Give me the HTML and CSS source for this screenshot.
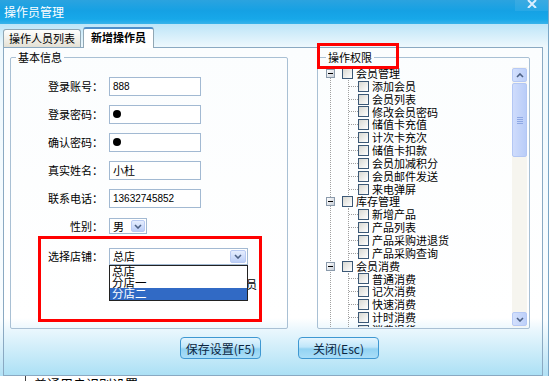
FILE: index.html
```html
<!doctype html>
<html>
    <head>
        <meta charset='utf-8'>
        <title>操作员管理</title>
        <link rel="stylesheet" href="styles.css">
    </head>
    <body>
        <div class='window'>
            <div class='titlebar'>
                <span class='title'>操作员管理</span>
                <span class='close'>
                    <svg width='10' height='8' viewBox='0 0 10 8'><path d='M1 0L9 8M9 0L1 8' stroke='#dcefff' stroke-width='2'/></svg>
                </span>
            </div>
            <div class='tabs'>
                <span class='tab'>操作人员列表</span>
                <span class='tab tab-active'>新增操作员</span>
            </div>
            <div class='panel'>
                <div class='groups'>
                    <fieldset class='group basic'>
                        <legend>基本信息</legend>
                        <div class='field'>
                            <span class='field-label'>登录账号：</span>
                            <span class='input'>888</span>
                        </div>
                        <div class='field'>
                            <span class='field-label'>登录密码：</span>
                            <span class='input'><i class='dot'></i></span>
                        </div>
                        <div class='field'>
                            <span class='field-label'>确认密码：</span>
                            <span class='input'><i class='dot'></i></span>
                        </div>
                        <div class='field'>
                            <span class='field-label'>真实姓名：</span>
                            <span class='input input-cjk'>小杜</span>
                        </div>
                        <div class='field'>
                            <span class='field-label'>联系电话：</span>
                            <span class='input'>13632745852</span>
                        </div>
                        <div class='field'>
                            <span class='field-label'>性别：</span>
                            <span class='select select-sex'>
                                <span>男</span>
                                <span class='select-btn'><svg width='8' height='5' viewBox='0 0 8 5'><path d='M1 1L4 4L7 1' fill='none' stroke='#4d6185' stroke-width='1.6'/></svg></span>
                            </span>
                        </div>
                        <div class='field field-shop'>
                            <span class='field-label'>选择店铺：</span>
                            <span class='select select-shop'>
                                <span>总店</span>
                                <span class='select-btn'><svg width='8' height='5' viewBox='0 0 8 5'><path d='M1 1L4 4L7 1' fill='none' stroke='#4d6185' stroke-width='1.6'/></svg></span>
                                <span class='options'>
                                    <span class='option'>总店</span>
                                    <span class='option'>分店一</span>
                                    <span class='option option-on'>分店二</span>
                                </span>
                            </span>
                        </div>
                        <div class='field'>
                            <span class='field-label'></span>
                            <span class='hidden-note'>设为店铺管理员</span>
                        </div>
                    </fieldset>
                    <fieldset class='group rights'>
                        <legend>操作权限</legend>
                        <div class='tree-wrap'>
                            <div class='tree'>
                                <div class='tree-lines'>
                                    <div class='node'>
                                        <div class='row'><i class='expander'></i><i class='check'></i>会员管理</div>
                                        <div class='children'>
                                            <div class='row'><i class='branch'></i><i class='check'></i>添加会员</div>
                                            <div class='row'><i class='branch'></i><i class='check'></i>会员列表</div>
                                            <div class='row'><i class='branch'></i><i class='check'></i>修改会员密码</div>
                                            <div class='row'><i class='branch'></i><i class='check'></i>储值卡充值</div>
                                            <div class='row'><i class='branch'></i><i class='check'></i>计次卡充次</div>
                                            <div class='row'><i class='branch'></i><i class='check'></i>储值卡扣款</div>
                                            <div class='row'><i class='branch'></i><i class='check'></i>会员加减积分</div>
                                            <div class='row'><i class='branch'></i><i class='check'></i>会员邮件发送</div>
                                            <div class='row'><i class='branch'></i><i class='check'></i>来电弹屏</div>
                                        </div>
                                    </div>
                                    <div class='node'>
                                        <div class='row'><i class='expander'></i><i class='check'></i>库存管理</div>
                                        <div class='children'>
                                            <div class='row'><i class='branch'></i><i class='check'></i>新增产品</div>
                                            <div class='row'><i class='branch'></i><i class='check'></i>产品列表</div>
                                            <div class='row'><i class='branch'></i><i class='check'></i>产品采购进退货</div>
                                            <div class='row'><i class='branch'></i><i class='check'></i>产品采购查询</div>
                                        </div>
                                    </div>
                                    <div class='node'>
                                        <div class='row'><i class='expander'></i><i class='check'></i>会员消费</div>
                                        <div class='children'>
                                            <div class='row'><i class='branch'></i><i class='check'></i>普通消费</div>
                                            <div class='row'><i class='branch'></i><i class='check'></i>记次消费</div>
                                            <div class='row'><i class='branch'></i><i class='check'></i>快速消费</div>
                                            <div class='row'><i class='branch'></i><i class='check'></i>计时消费</div>
                                            <div class='row'><i class='branch'></i><i class='check'></i>消费退货</div>
                                        </div>
                                    </div>
                                </div>
                            </div>
                            <div class='scrollbar'>
                                <span class='sb-btn'><svg width='8' height='5' viewBox='0 0 8 5'><path d='M1 4L4 1L7 4' fill='none' stroke='#4d6185' stroke-width='1.6'/></svg></span>
                                <span class='sb-thumb'><i class='grip'></i></span>
                                <span class='sb-track'></span>
                                <span class='sb-btn'><svg width='8' height='5' viewBox='0 0 8 5'><path d='M1 1L4 4L7 1' fill='none' stroke='#4d6185' stroke-width='1.6'/></svg></span>
                            </div>
                        </div>
                    </fieldset>
                </div>
                <div class='actions'>
                    <button class='btn'>保存设置(F5)</button>
                    <button class='btn'>关闭(Esc)</button>
                </div>
            </div>
            <div class='mark mark-rights'></div>
            <div class='mark mark-shop'></div>
        </div>
        <div class='below'>普通用户识别设置</div>
    </body>
</html>
```
FILE: styles.css
```css
html,body {
    margin:0;
    padding:0;
}
body {
    width:549px;
    height:381px;
    overflow:hidden;
    background:#fff;
    font-family:"Noto Sans CJK SC",sans-serif;
    font-size:11px;
    color:#000;
}
i {
    display:block;
    font-style:normal;
}
.window {
    position:relative;
    height:376px;
    box-sizing:border-box;
    border-right:1px solid #7aa6c6;
    background:linear-gradient(#bde5f8 24px,#eef8fd 47px,#f9fdff 320px,#b2e1f5 376px);
}
.titlebar {
    height:24px;
    display:flex;
    justify-content:space-between;
    background:linear-gradient(#2ba3df,#15a1e4 45%,#17a8e9 80%,#3ab3ea);
    color:#fff;
}
.title {
    padding-left:4px;
    font-size:12px;
    line-height:24px;
}
.close {
    width:33px;
    height:11px;
    display:flex;
    justify-content:center;
    background:rgba(255,255,255,0.08);
}
.tabs {
    height:23px;
    display:flex;
    align-items:flex-end;
    padding-left:3px;
}
.tab {
    box-sizing:border-box;
    height:18px;
    padding:0 5px;
    border:1px solid #91a7b4;
    border-bottom:0;
    border-radius:3px 3px 0 0;
    background:linear-gradient(#fefefd,#f1efe8 55%,#e3e0d4);
    line-height:17px;
    white-space:nowrap;
}
.tab-active {
    position:relative;
    z-index:1;
    height:21px;
    margin-left:2px;
    margin-bottom:-1px;
    padding:0 7px;
    border-top:2px solid #4f8fca;
    background:#fff;
    font-weight:bold;
}
.panel {
    box-sizing:border-box;
    width:540px;
    height:329px;
    margin-left:3px;
    border:1px solid #8aa9c2;
    background:linear-gradient(#fbfdfe,#fff 270px,#e8f6fd 283px,#ace0f5);
}
.groups {
    display:flex;
    gap:29px;
    padding:2px 0 0 6px;
}
.group {
    box-sizing:border-box;
    height:279px;
    margin:0;
    padding:0;
    min-width:0;
    border:1px solid #a9c0d4;
    border-radius:2px;
}
.group legend {
    margin-left:5px;
    padding:0 2px;
    font-size:11px;
    line-height:14px;
}
.basic {
    width:278px;
    padding-top:8px;
}
.rights {
    width:213px;
    padding:3px 1px 0 0;
}
.rights legend {
    margin-left:8px;
}
.field {
    display:flex;
    align-items:center;
    height:28px;
}
.field-shop {
    margin-top:2px;
}
.field-label {
    flex:none;
    width:92px;
    margin-right:6px;
    text-align:right;
}
.input {
    box-sizing:border-box;
    width:92px;
    height:19px;
    padding-left:3px;
    display:flex;
    align-items:center;
    border:1px solid #a2b9d2;
    background:#fff;
    font-family:"Liberation Sans",sans-serif;
    font-size:10px;
}
.input-cjk {
    font-family:"Noto Sans CJK SC",sans-serif;
    font-size:11px;
}
.dot {
    width:8px;
    height:8px;
    border-radius:50%;
    background:#000;
}
.select {
    position:relative;
    box-sizing:border-box;
    height:16px;
    padding:0 1px 0 3px;
    display:flex;
    align-items:center;
    justify-content:space-between;
    border:1px solid #a2b9d2;
    background:#fff;
    line-height:14px;
}
.select-sex {
    width:38px;
}
.select-shop {
    width:139px;
    height:17px;
}
.select-btn {
    box-sizing:border-box;
    width:14px;
    height:12px;
    display:flex;
    align-items:center;
    justify-content:center;
    border:1px solid #b9cbf3;
    border-radius:2px;
    background:linear-gradient(#e6eefe,#bccff8);
}
.select-shop .select-btn {
    width:16px;
    height:13px;
}
.options {
    position:absolute;
    left:-1px;
    top:calc(100% + 1px);
    z-index:2;
    box-sizing:border-box;
    width:139px;
    border:1px solid #222;
    background:#fff;
    font-size:11.5px;
    line-height:11.4px;
}
.option {
    display:block;
    padding-left:2px;
}
.option-on {
    background:#316ac5;
    color:#fff;
}
.hidden-note {
    padding-left:71px;
}
.tree-wrap {
    display:flex;
    height:260px;
}
.tree {
    flex:1;
    overflow:hidden;
    padding-left:12px;
}
.tree-lines {
    border-left:1px dotted #a0a0a0;
}
.row {
    display:flex;
    align-items:center;
    height:12.85px;
    line-height:12.85px;
    white-space:nowrap;
}
.expander {
    position:relative;
    box-sizing:border-box;
    width:9px;
    height:9px;
    margin-left:-5px;
    margin-right:7px;
    border:1px solid #8a9aab;
    background:linear-gradient(135deg,#fff,#c9cfd8);
}
.expander:after {
    content:'';
    position:absolute;
    left:1px;
    top:3px;
    width:5px;
    height:1px;
    background:#000;
}
.check {
    flex:none;
    box-sizing:border-box;
    width:11px;
    height:11px;
    margin-right:3px;
    border:1px solid #3b5876;
    background:linear-gradient(135deg,#d8d8d2,#fff);
}
.children {
    margin-left:17px;
    border-left:1px dotted #a0a0a0;
}
.branch {
    width:9px;
    border-top:1px dotted #a0a0a0;
}
.scrollbar {
    width:15px;
    margin-right:1px;
    padding:1px 0;
    display:flex;
    flex-direction:column;
    box-sizing:border-box;
    background:#f6f5ef;
}
.sb-btn {
    box-sizing:border-box;
    height:14px;
    display:flex;
    align-items:center;
    justify-content:center;
    border:1px solid #b6c9f5;
    border-radius:2px;
    background:linear-gradient(90deg,#d3e0fd,#bdd0f9);
}
.sb-thumb {
    box-sizing:border-box;
    height:74px;
    margin-top:1px;
    display:flex;
    align-items:center;
    justify-content:center;
    border:1px solid #b3c7f4;
    border-radius:2px;
    background:linear-gradient(90deg,#cfdcfc,#b9cdf8);
}
.grip {
    width:6px;
    height:7px;
    background:repeating-linear-gradient(#8ea8e4 0,#8ea8e4 1px,transparent 1px,transparent 2px);
}
.sb-track {
    flex:1;
}
.actions {
    display:flex;
    gap:37px;
    padding:8px 0 0 176px;
}
.btn {
    box-sizing:border-box;
    width:81px;
    height:22px;
    padding:0;
    border:1px solid #3f98d2;
    border-radius:4px;
    background:linear-gradient(#e4f5fe,#bfe6fa 45%,#93d3f3 55%,#a9def8);
    font-family:"Noto Sans CJK SC",sans-serif;
    font-size:12px;
    color:#0b2540;
}
.mark {
    position:absolute;
    box-sizing:border-box;
    border:3px solid #f00;
}
.mark-rights {
    left:317px;
    top:43px;
    width:82px;
    height:26px;
}
.mark-shop {
    left:38px;
    top:236px;
    width:224px;
    height:86px;
}
.below {
    height:5px;
    margin-left:25px;
    padding-left:8px;
    overflow:hidden;
    border-left:1px solid #444;
    font-size:13px;
    line-height:15px;
}
```
